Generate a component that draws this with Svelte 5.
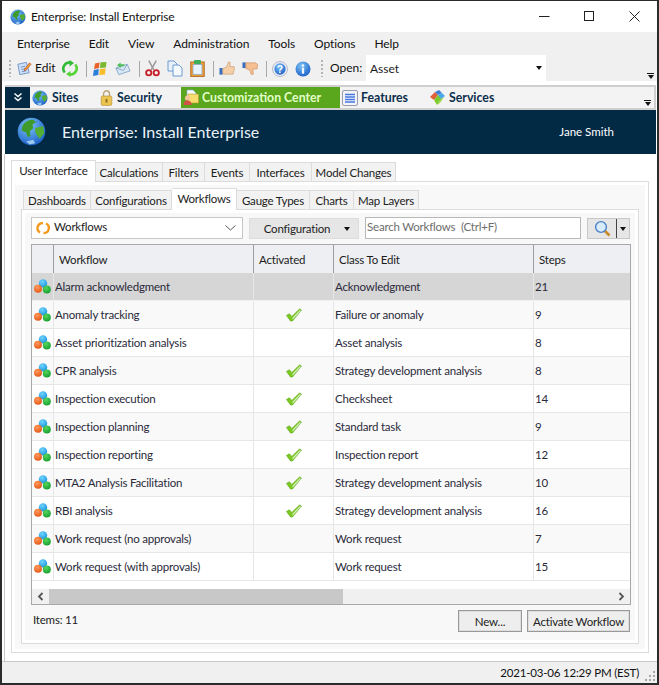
<script>
  const menus = ['Enterprise', 'Edit', 'View', 'Administration', 'Tools', 'Options', 'Help'];
  const outerTabs = [
    { t: 'User Interface', w: 85, active: true },
    { t: 'Calculations', w: 67 },
    { t: 'Filters', w: 42 },
    { t: 'Events', w: 45 },
    { t: 'Interfaces', w: 62 },
    { t: 'Model Changes', w: 84 }
  ];
  const innerTabs = [
    { t: 'Dashboards', w: 68 },
    { t: 'Configurations', w: 81 },
    { t: 'Workflows', w: 65, active: true },
    { t: 'Gauge Types', w: 73 },
    { t: 'Charts', w: 44 },
    { t: 'Map Layers', w: 65 }
  ];
  const rows = [
    ['Alarm acknowledgment', false, 'Acknowledgment', '21'],
    ['Anomaly tracking', true, 'Failure or anomaly', '9'],
    ['Asset prioritization analysis', false, 'Asset analysis', '8'],
    ['CPR analysis', true, 'Strategy development analysis', '8'],
    ['Inspection execution', true, 'Checksheet', '14'],
    ['Inspection planning', true, 'Standard task', '9'],
    ['Inspection reporting', true, 'Inspection report', '12'],
    ['MTA2 Analysis Facilitation', true, 'Strategy development analysis', '10'],
    ['RBI analysis', true, 'Strategy development analysis', '16'],
    ['Work request (no approvals)', false, 'Work request', '7'],
    ['Work request (with approvals)', false, 'Work request', '15']
  ];
</script>

{#snippet globe(size)}
  <svg class="ic" width={size} height={size} viewBox="0 0 16 16">
    <circle cx="8" cy="8" r="7.6" fill="url(#gBlue)" />
    <path d="M3 5 C4 2.5 7 1.2 9 1.5 L10.5 3 L8.5 4 L9 6 L7 8 L7.5 10.5 L6 11 L5 8.5 L2.5 7.5Z" fill="#3f9a2c" />
    <path d="M10 6 L14.5 5 L15 9 L12.5 12 L11 10 L10 8Z" fill="#56ad34" />
    <path d="M5 13.5 L9 12.5 L10 14.5 L7 15.2Z" fill="#9cc9ef" />
  </svg>
{/snippet}

{#snippet drop()}<span class="tri"></span>{/snippet}

{#snippet overflow()}
  <span class="over"><span class="bar"></span><span class="tri"></span></span>
{/snippet}

{#snippet cubes()}
  <svg class="ic" width="17" height="16" viewBox="0 0 17 16">
    <circle cx="9" cy="4.4" r="4.2" fill="url(#gCyan)" />
    <circle cx="4" cy="9.8" r="4" fill="url(#gOrange)" />
    <circle cx="12.8" cy="10.6" r="4" fill="url(#gGreen)" />
  </svg>
{/snippet}

{#snippet check()}
  <svg class="ic" width="18" height="14" viewBox="0 0 17 14">
    <path d="M1 7.5 L3.8 5.8 L6.4 8.4 L14 1 L16 2 L7 13 L5 13Z" fill="#7bc91f" stroke="#5aa316" stroke-width=".6" />
    <path d="M7 9.8 L14.4 2 L15.4 2.4 L7.2 11.8Z" fill="#d3efc0" />
  </svg>
{/snippet}

<svg class="defs" width="0" height="0" aria-hidden="true">
  <defs>
    <radialGradient id="gBlue" cx=".4" cy=".3" r=".8"><stop offset="0" stop-color="#7cc3f5" /><stop offset="1" stop-color="#1257c4" /></radialGradient>
    <radialGradient id="gCyan" cx=".4" cy=".3" r=".8"><stop offset="0" stop-color="#6fd4fb" /><stop offset="1" stop-color="#0f8ee0" /></radialGradient>
    <radialGradient id="gOrange" cx=".4" cy=".3" r=".8"><stop offset="0" stop-color="#ff9a5c" /><stop offset="1" stop-color="#e2500f" /></radialGradient>
    <radialGradient id="gGreen" cx=".4" cy=".3" r=".8"><stop offset="0" stop-color="#55d460" /><stop offset="1" stop-color="#0f9a28" /></radialGradient>
  </defs>
</svg>

<div class="window">
  <header class="titlebar">
    {@render globe(16)}
    <span class="title">Enterprise: Install Enterprise</span>
    <div class="controls">
      <svg width="11" height="11" viewBox="0 0 11 11"><path d="M0 5.5H10.5" stroke="#222" /></svg>
      <svg width="11" height="11" viewBox="0 0 11 11"><rect x=".5" y=".5" width="9" height="9" fill="none" stroke="#222" /></svg>
      <svg width="11" height="11" viewBox="0 0 11 11"><path d="M.5 .5L10.5 10.5M10.5 .5L.5 10.5" stroke="#222" /></svg>
    </div>
  </header>

  <nav class="menu">
    {#each menus as m}<span>{m}</span>{/each}
  </nav>

  <div class="toolbar">
    <span class="grip"></span>
    <svg class="tool first" width="16" height="17" viewBox="0 0 17 17">
      <path d="M2 4L11 2L14 13L4 15Z" fill="#cfe1f7" stroke="#6f94c8" />
      <path d="M5 7L10 6M5.5 9.5L10.5 8.5M6 12L11 11" stroke="#6f94c8" />
      <path d="M9 9L14.5 2.5L16 4L11 10L8.5 11Z" fill="#f0a030" stroke="#b23b2c" stroke-width=".6" />
    </svg>
    <span class="edit">Edit</span>
    <svg class="tool" width="16" height="17" viewBox="0 0 16 17">
      <path d="M2.8 12.5A6 6 0 0 1 8 2.6" fill="none" stroke="#2fbb36" stroke-width="2.6" />
      <path d="M7.5 0L12 3L7.5 6.4Z" fill="#2fbb36" />
      <path d="M13.2 4.5A6 6 0 0 1 8 14.4" fill="none" stroke="#55d438" stroke-width="2.6" />
      <path d="M8.5 11L4 14L8.5 17Z" fill="#55d438" />
    </svg>
    <span class="sep"></span>
    <svg class="tool" width="16" height="16" viewBox="0 0 16 16">
      <path d="M3 2.5L7.5 1.5L7 7L2 8Z" fill="#e8622a" />
      <path d="M8.5 1.3L14.5 1L13.8 6.5L8 7Z" fill="#7cb82f" />
      <path d="M1.8 9L6.8 8L6.3 14L1 15Z" fill="#2c7fd8" />
      <path d="M7.8 8L13.6 7.5L13 13.5L7.3 14Z" fill="#f7bd2b" />
    </svg>
    <svg class="tool" width="16" height="16" viewBox="0 0 17 16">
      <path d="M1 7L13 3L16 10L4 14Z" fill="#d9e8f6" stroke="#8aa9c8" />
      <path d="M1 7L9 9.5L13 3" fill="none" stroke="#8aa9c8" />
      <path d="M2 4L6 1L6 3L10 3L10 5L6 5L6 7Z" fill="#4cbf5a" />
    </svg>
    <span class="sep"></span>
    <svg class="tool" width="15" height="17" viewBox="0 0 16 17">
      <path d="M4 0L9.5 10M12 0L6.5 10" stroke="#9a9a9a" stroke-width="1.6" />
      <circle cx="4" cy="13" r="2.8" fill="none" stroke="#c8202a" stroke-width="2" />
      <circle cx="12" cy="13" r="2.8" fill="none" stroke="#c8202a" stroke-width="2" />
    </svg>
    <svg class="tool" width="16" height="17" viewBox="0 0 16 17">
      <path d="M1 1H7L10 4V11H1Z" fill="#e8f1fb" stroke="#6c9ad0" />
      <path d="M6 5H12L15 8V16H6Z" fill="#f4f9ff" stroke="#6c9ad0" />
    </svg>
    <svg class="tool" width="15" height="17" viewBox="0 0 15 17">
      <rect x=".8" y="2" width="13.4" height="14.4" fill="#f5a33c" stroke="#b06a20" />
      <rect x="3" y="4.5" width="9" height="10" fill="#e8f4fd" stroke="#6c9ad0" stroke-width=".6" />
      <rect x="4" y="0" width="7" height="4" rx="1" fill="#3fae5a" />
    </svg>
    <span class="sep"></span>
    <svg class="tool" width="16" height="15" viewBox="0 0 17 15">
      <rect x="0.5" y="7" width="3.5" height="7" fill="#3a6fc0" />
      <path d="M4 7.5L8 6L10 .6L12 1L11.5 5.5H16L16.5 7L15 13.5H6L4 13Z" fill="#f6cfa8" stroke="#c69c72" stroke-width=".7" />
    </svg>
    <svg class="tool" width="16" height="15" viewBox="0 0 17 15">
      <rect x="0.5" y="1" width="3.5" height="6" fill="#3a6fc0" />
      <path d="M4 1.5H14L16.5 3L16 8H11.5L12 13.5L10 14L8 9L4 7.5Z" fill="#f6bf92" stroke="#c98f62" stroke-width=".7" />
    </svg>
    <span class="sep"></span>
    <svg class="tool" width="16" height="16" viewBox="0 0 17 17">
      <circle cx="8.5" cy="8.5" r="8" fill="#ececf4" stroke="#8b93b0" stroke-width=".6" />
      <circle cx="8.5" cy="8.5" r="6" fill="url(#gBlue)" />
      <text x="8.5" y="12.5" text-anchor="middle" class="q">?</text>
    </svg>
    <svg class="tool" width="16" height="16" viewBox="0 0 17 17">
      <circle cx="8.5" cy="8.5" r="8" fill="url(#gBlue)" />
      <rect x="7.3" y="7" width="2.4" height="6.5" fill="#eef6ff" />
      <circle cx="8.5" cy="4.8" r="1.4" fill="#eef6ff" />
    </svg>
    <span class="grip second"></span>
    <span class="open-label">Open:</span>
    <div class="open-select"><span>Asset</span>{@render drop()}</div>
    {@render overflow()}
  </div>

  <div class="gap-line"></div>

  <div class="navbar">
    <div class="collapse">
      <svg width="10" height="9" viewBox="0 0 10 9"><path d="M1.5 .5L5 3.5L8.5 .5M1.5 4.5L5 7.5L8.5 4.5" fill="none" stroke="#fff" stroke-width="1.4" /></svg>
    </div>
    <div class="nav-item sites">{@render globe(16)}<b>Sites</b></div>
    <div class="nav-item security">
      <svg class="ic" width="13" height="16" viewBox="0 0 13 16">
        <path d="M3.5 7V4C3.5 2 5 .8 6.5 .8S9.5 2 9.5 4V7" fill="none" stroke="#b9a679" stroke-width="1.4" />
        <rect x="1.2" y="6" width="10.6" height="9.4" rx="1.5" fill="#ecc450" stroke="#b08a2c" stroke-width=".6" />
        <rect x="5.6" y="9" width="1.8" height="3.6" fill="#8a6a1c" />
      </svg>
      <b>Security</b>
    </div>
    <div class="nav-item custom">
      <svg class="ic" width="16" height="17" viewBox="0 0 16 17">
        <path d="M4 1H10L13 4V9H4Z" fill="#f6fbff" stroke="#8eb0d0" stroke-width=".7" />
        <rect x="5" y="5" width="10.5" height="9" fill="#f8dc70" stroke="#b89a30" stroke-width=".6" />
        <circle cx="4.5" cy="9" r="2.6" fill="#f4c49a" />
        <path d="M.5 16C.5 12.5 2.5 11.5 4.5 11.5S8.5 12.5 8.5 16Z" fill="#d2504a" />
      </svg>
      <b>Customization Center</b>
    </div>
    <div class="nav-item features">
      <svg class="ic" width="16" height="16" viewBox="0 0 16 16">
        <rect x=".5" y=".5" width="15" height="15" rx="1.5" fill="#f2f4fb" stroke="#9a9aa8" />
        <path d="M3 4.5H13M3 7H13M3 9.5H13M3 12H13" stroke="#4a78e0" stroke-width="1.3" />
      </svg>
      <b>Features</b>
    </div>
    <div class="nav-item services">
      <svg class="ic" width="17" height="17" viewBox="0 0 17 17">
        <path d="M1 8L6 3L9 6L5 11Z" fill="#e0603a" />
        <path d="M6 3L10 1L13 4L9 6Z" fill="#3f7fd8" />
        <path d="M9 6L13 4L16 7L11 11Z" fill="#4aa8e8" />
        <path d="M5 11L9 6L12 10L8 16Z" fill="#7ccb2f" />
        <path d="M12 10L15 8L11 14L8 16Z" fill="#a4d84a" />
      </svg>
      <b>Services</b>
    </div>
    {@render overflow()}
  </div>

  <div class="banner">
    {@render globe(29)}
    <h1>Enterprise: Install Enterprise</h1>
    <span class="user">Jane Smith</span>
  </div>

  <main class="main">
    <div class="tabs outer">
      {#each outerTabs as t}
        <span class="tab" class:active={t.active} style="width:{t.w}px">{t.t}</span>
      {/each}
    </div>
    <section class="panel outer-panel">
      <div class="fill outer-fill">
        <div class="tabs inner">
          {#each innerTabs as t}
            <span class="tab" class:active={t.active} style="width:{t.w}px">{t.t}</span>
          {/each}
        </div>
        <section class="panel inner-panel">
          <div class="fill inner-fill">
            <div class="filters">
              <div class="combo">
                <svg class="ic" width="16" height="14" viewBox="0 0 16 14">
                  <path d="M5 11.5A5 5 0 0 1 8 2.2" fill="none" stroke="#f39a1e" stroke-width="2.4" />
                  <path d="M11 2.5A5 5 0 0 1 8.5 12" fill="none" stroke="#f39a1e" stroke-width="2.4" />
                </svg>
                <span>Workflows</span>
                <svg class="chev" width="11" height="6" viewBox="0 0 11 6"><path d="M.5 .5L5.5 5L10.5 .5" fill="none" stroke="#555" /></svg>
              </div>
              <div class="btn config"><span>Configuration</span>{@render drop()}</div>
              <div class="search">Search Workflows&nbsp; (Ctrl+F)</div>
              <div class="searchbtn">
                <span class="mag">
                  <svg width="17" height="17" viewBox="0 0 17 17">
                    <path d="M10.5 10.5L15.5 15.5" stroke="#c98a2a" stroke-width="2.6" />
                    <circle cx="7" cy="7" r="5.4" fill="#d6ecfb" stroke="#4a7fc8" stroke-width="1.4" />
                  </svg>
                </span>
                <span class="mag-drop">{@render drop()}</span>
              </div>
            </div>

            <div class="grid">
              <div class="thead">
                <span class="sel"></span>
                <span class="th">Workflow</span>
                <span class="th">Activated</span>
                <span class="th">Class To Edit</span>
                <span class="th">Steps</span>
              </div>
              {#each rows as r, i}
                <div class="row" class:selected={i === 0} class:alt={i % 2 === 1}>
                  <span class="sel cell-ic">{@render cubes()}</span>
                  <span class="td">{r[0]}</span>
                  <span class="td mid">{#if r[1]}{@render check()}{/if}</span>
                  <span class="td">{r[2]}</span>
                  <span class="td">{r[3]}</span>
                </div>
              {/each}
              <div class="spacer"></div>
              <div class="hscroll">
                <svg width="7" height="9" viewBox="0 0 7 9"><path d="M5.5 1L2 4.5L5.5 8" fill="none" stroke="#555" stroke-width="1.8" /></svg>
                <div class="track"><div class="thumb"></div></div>
                <svg width="7" height="9" viewBox="0 0 7 9"><path d="M1.5 1L5 4.5L1.5 8" fill="none" stroke="#555" stroke-width="1.8" /></svg>
              </div>
            </div>

            <div class="footer">
              <span class="items">Items: 11</span>
              <div class="btn new">New...</div>
              <div class="btn activate">Activate Workflow</div>
            </div>
          </div>
        </section>
      </div>
    </section>
  </main>

  <footer class="status">
    <span>2021-03-06 12:29 PM (EST)</span>
    <svg width="10" height="10" viewBox="0 0 10 10" fill="#a8a8a8"><rect x="8" y="0" width="2" height="2" /><rect x="4" y="4" width="2" height="2" /><rect x="8" y="4" width="2" height="2" /><rect x="0" y="8" width="2" height="2" /><rect x="4" y="8" width="2" height="2" /><rect x="8" y="8" width="2" height="2" /></svg>
  </footer>
</div>

<style>
  :global(body) { margin: 0; background: #fff; }
  .defs { position: absolute; }
  .window {
    box-sizing: border-box;
    width: 659px;
    height: 685px;
    border: 2px solid #2b2b2b;
    border-top-width: 1px;
    display: flex;
    flex-direction: column;
    background: #fff;
    font: 12px Lato, "Open Sans", sans-serif;
    color: #1c1c1c;
    overflow: hidden;
  }
  .ic { display: block; flex: none; }

  .titlebar { height: 31px; flex: none; display: flex; align-items: center; padding-left: 8px; }
  .title { margin-left: 5px; color: #111; letter-spacing: -.15px; }
  .controls { margin-left: auto; display: flex; gap: 34px; padding-right: 17px; }

  .menu { height: 24px; box-sizing: border-box; padding: 0 0 2px 15px; flex: none; background: #f0f0f0; display: flex; align-items: center; gap: 19px; color: #111; letter-spacing: -.1px; }

  .toolbar { height: 25px; flex: none; background: #f0f0f0; display: flex; align-items: center; padding-left: 7px; position: relative; }
  .grip { width: 2px; height: 17px; background: repeating-linear-gradient(#b4b4b4 0 2px, transparent 2px 4px); flex: none; }
  .grip.second { margin-left: 10px; }
  .tool { flex: none; margin-left: 7px; display: block; }
  .tool.first { margin-left: 5px; }
  .edit { margin: 0 0 2px 3px; color: #111; width: 20px; }
  .sep { width: 1px; height: 16px; background: #a8a8a8; flex: none; margin: 0 -2px 0 8px; }
  .open-label { margin: 0 0 2px 7px; width: 36px; color: #111; }
  .open-select { align-self: stretch; width: 180px; background: #fff; display: flex; align-items: center; padding-left: 4px; box-sizing: border-box; position: relative; margin-top: -1px; }
  .open-select span:first-child { flex: 1; }
  .open-select .tri { position: absolute; right: 4px; top: 11px; }
  .tri { display: block; width: 0; height: 0; border-left: 3.5px solid transparent; border-right: 3.5px solid transparent; border-top: 4px solid #111; flex: none; }
  .over { position: absolute; right: 3px; bottom: 2px; display: flex; flex-direction: column; align-items: center; gap: 1px; }
  .over .bar { width: 7px; height: 1px; background: #111; }

  .gap-line { height: 4px; flex: none; background: #fff; }

  .navbar { height: 25px; flex: none; margin-left: 3px; margin-right: 1px; box-sizing: border-box; border-top: 2px solid #cfcfcf; border-bottom: 2px solid #cfcfcf; border-right: 2px solid #cfcfcf; background: #f3f3f3; display: flex; align-items: center; position: relative; }
  .collapse { width: 25px; align-self: stretch; background: #022a45; display: flex; align-items: center; justify-content: center; flex: none; }
  .nav-item { display: flex; align-items: center; gap: 4px; flex: none; align-self: stretch; box-sizing: border-box; }
  .nav-item b { color: #0b2f4d; font-weight: 700; font-size: 12.3px; }
  .sites { margin-left: 2px; width: 68px; }
  .security { width: 81px; gap: 4px; }
  .custom { background: #5aa61c; width: 159px; padding-left: 2px; gap: 3px; }
  .custom b { color: #e2ffc8; }
  .features { margin-left: 2px; width: 87px; gap: 3px; }
  .services { gap: 3px; }

  .banner { height: 44px; box-sizing: border-box; padding: 0 0 2px 12px; flex: none; margin-left: 3px; margin-right: 1px; background: #022a45; display: flex; align-items: center; color: #fff; }
  .banner h1 { margin: 0 0 0 16px; font-size: 16px; font-weight: 400; color: #eaf2f8; }
  .user { margin-left: auto; margin-right: 42px; font-size: 11.5px; }

  .main { flex: 1; min-height: 0; padding: 6px 8px 8px 6px; background: #fff; box-sizing: border-box; display: flex; flex-direction: column; border-left: 1px solid #c8c8c8; margin-left: 2px; font-size: 11.5px; letter-spacing: -.2px; }

  .tabs { display: flex; align-items: flex-end; position: relative; z-index: 1; flex: none; }
  .tab { box-sizing: border-box; height: 19px; display: flex; align-items: center; justify-content: center; flex: none; background: #f2f2f2; border: 1px solid #dcdcdc; border-bottom: 0; color: #1c1c1c; white-space: nowrap; }
  .tab + .tab { border-left: 0; }
  .tab.active { height: 22px; background: #fff; margin-bottom: -1px; padding-bottom: 3px; }

  .panel { box-sizing: border-box; border: 1px solid #dcdcdc; background: #fff; padding: 3px; display: flex; flex-direction: column; min-height: 0; flex: 1; }
  .fill { flex: 1; min-height: 0; background: #f8f8f8; display: flex; flex-direction: column; }
  .outer-fill { padding: 3px 6px 5px 6px; }
  .inner { margin-left: 2px; }
  .inner-fill { padding: 4px 4px 0 6px; }

  .filters { display: flex; align-items: flex-start; height: 27px; flex: none; }
  .combo { box-sizing: border-box; width: 212px; height: 22px; background: #fff; border: 1px solid #c6c6c6; display: flex; align-items: center; padding: 0 6px 3px 3px; gap: 3px; }
  .combo span { flex: 1; }
  .combo .chev { margin-top: 3px; }
  .combo .ic { margin-top: 3px; }
  .btn { box-sizing: border-box; background: #eee; border: 1px solid #999; box-shadow: inset 0 0 0 1px #dedede; display: flex; align-items: center; justify-content: center; color: #222; }
  .config { margin-left: 6px; margin-top: 1px; width: 110px; height: 21px; background: #e6e6e6; border: 1px solid #dcdcdc; box-shadow: none; gap: 14px; padding-left: 6px; }
  .search { box-sizing: border-box; margin-left: 6px; width: 216px; height: 22px; background: #fff; border: 1px solid #b8b8b8; padding: 0 0 4px 1px; display: flex; align-items: center; color: #6e6e6e; }
  .searchbtn { margin-left: 6px; margin-top: 1px; width: 43px; height: 21px; display: flex; box-sizing: border-box; border: 1px solid #c8c8c8; background: #e6e6e6; }
  .mag { width: 28px; display: flex; align-items: center; justify-content: center; border-right: 1px solid #444; }
  .mag-drop { flex: 1; display: flex; align-items: center; justify-content: center; }

  .grid { box-sizing: border-box; width: 600px; height: 361px; flex: none; border: 1px solid #a8a8a8; display: flex; flex-direction: column; background: #fff; }
  .thead, .row { display: grid; grid-template-columns: 21px 200px 80px 200px 1fr; flex: none; }
  .thead { height: 28px; background: #edeff2; }
  .th { border-left: 1px solid #9c9c9c; padding: 0 0 0 5px; display: flex; align-items: center; color: #1c1c1c; }
  .row { height: 28px; box-sizing: border-box; border-bottom: 1px solid #e6e6e6; background: #fff; }
  .row.alt { background: #f9f9f9; }
  .row.selected { background: #d6d6d6; border-bottom-color: #f0f0f0; }
  .sel.cell-ic { display: flex; align-items: center; justify-content: center; }
  .row .sel { background: inherit; }
  .td { border-left: 1px solid #e6e6e6; padding-left: 1px; display: flex; align-items: center; color: #2a2a3a; min-width: 0; white-space: nowrap; }
  .td.mid { justify-content: center; padding-left: 0; }
  .spacer { flex: 1; }
  .hscroll { height: 15px; flex: none; background: #f0f0f0; display: flex; align-items: center; }
  .hscroll svg { flex: none; margin: 0 5px; }
  .track { flex: 1; height: 100%; }
  .thumb { width: 294px; height: 100%; background: #c8c8c8; }

  .footer { flex: none; display: flex; align-items: flex-start; margin-top: 5px; padding-left: 2px; }
  .items { margin-top: 3px; color: #222; }
  .new { margin-left: auto; width: 64px; height: 22px; }
  .activate { margin-left: 5px; margin-right: 1px; width: 103px; height: 22px; }

  .status { height: 22px; flex: none; box-sizing: border-box; background: #f0f0f0; border-top: 1px solid #c8c8c8; display: flex; align-items: center; justify-content: flex-end; gap: 6px; padding-right: 2px; color: #111; font-size: 11.5px; letter-spacing: -.2px; }
  .status svg { margin-top: 6px; }

  .q { font: 700 11px "Liberation Sans", sans-serif; fill: #fff; }
</style>
